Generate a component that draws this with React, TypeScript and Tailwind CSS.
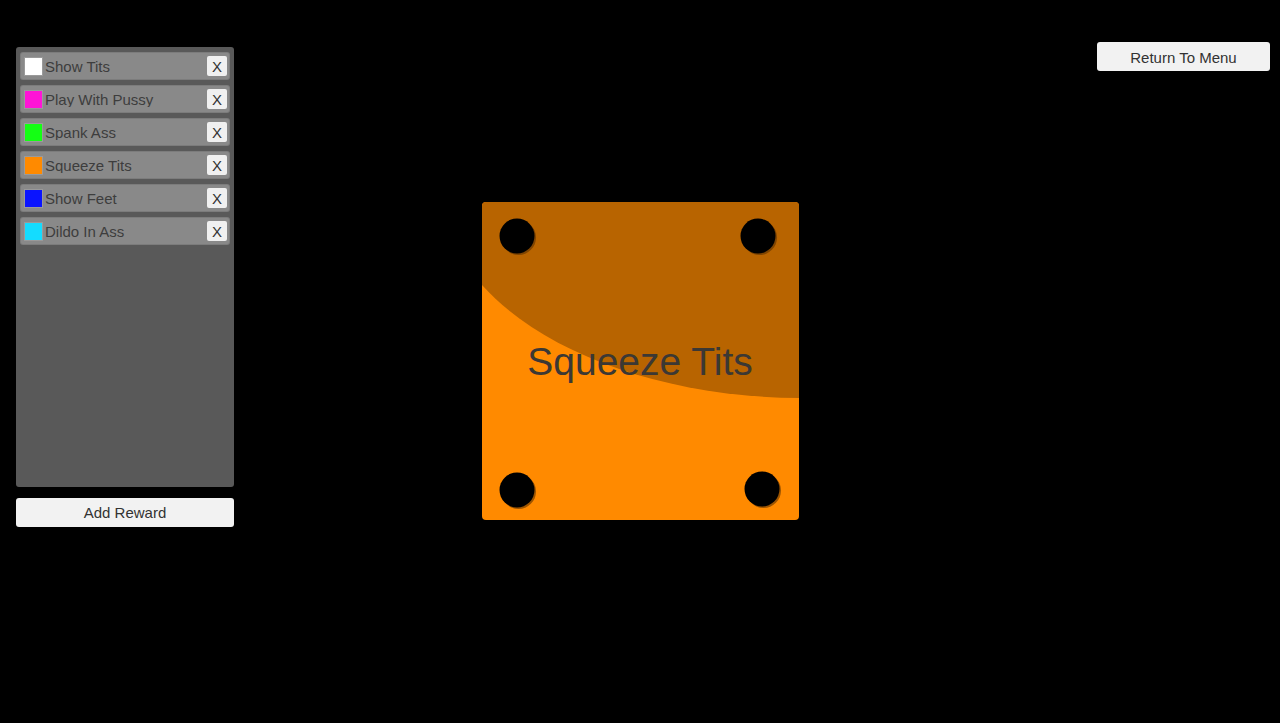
import React from "react";

type Reward = { name: string; color: string };

const rewards: Reward[] = [
  { name: "Show Tits", color: "#ffffff" },
  { name: "Play With Pussy", color: "#ff14d6" },
  { name: "Spank Ass", color: "#14ff14" },
  { name: "Squeeze Tits", color: "#ff8a00" },
  { name: "Show Feet", color: "#0a14ff" },
  { name: "Dildo In Ass", color: "#14dcff" },
];

// corner holes, card coordinates
const holes = [
  { cx: 35, cy: 34 },
  { cx: 276, cy: 34 },
  { cx: 35, cy: 288 },
  { cx: 280, cy: 287 },
];

function RewardRow({ reward }: { reward: Reward }) {
  return (
    <div className="flex h-[26px] items-center rounded-[2px] bg-[#898989] pl-[3px] pr-[2px] shadow-[0_0_0_1px_#7c7c7c]">
      <div
        className="h-[19px] w-[19px] shrink-0 border border-[#9a9a9a]"
        style={{ backgroundColor: reward.color }}
      />
      <span className="ml-[2px] flex-1 truncate pt-[1px] text-[15px] leading-none text-[#3d3d3d]">
        {reward.name}
      </span>
      <button className="flex h-[20px] w-[20px] items-center justify-center rounded-[2px] bg-[#f0f0f0] pt-[1px] text-[15px] leading-none text-[#333]">
        X
      </button>
    </div>
  );
}

function Card({ label }: { label: string }) {
  return (
    <div className="relative h-[318px] w-[317px] overflow-hidden rounded-[4px] bg-[#ff8a00]">
      <svg
        className="absolute inset-0"
        width="317"
        height="318"
        viewBox="0 0 317 318"
      >
        <path d="M0,0 H317 V196 C180,195 60,150 0,83 Z" fill="#b86400" />
        {holes.map((h, i) => (
          <g key={i}>
            <circle cx={h.cx + 1.5} cy={h.cy + 1.5} r="17.5" fill="#5a3000" opacity="0.6" />
            <circle cx={h.cx} cy={h.cy} r="17.5" fill="#000" />
          </g>
        ))}
      </svg>
      <div className="relative flex h-full items-center justify-center">
        <span className="text-[39px] leading-none text-[#3b3834]">{label}</span>
      </div>
    </div>
  );
}

export default function App() {
  return (
    <div
      className="flex h-[723px] w-full bg-black"
      style={{ fontFamily: '"Liberation Sans", Arial, sans-serif' }}
    >
      <div className="w-[234px] shrink-0 pl-4 pt-[47px]">
        <div className="flex h-[440px] flex-col gap-[7px] rounded-[3px] bg-[#595959] px-[5px] pt-[6px]">
          {rewards.map((r) => (
            <RewardRow key={r.name} reward={r} />
          ))}
        </div>
        <button className="mt-[11px] flex h-[29px] w-full items-center justify-center rounded-[3px] bg-[#f2f2f2] pt-[2px] text-[15px] text-[#333]">
          Add Reward
        </button>
      </div>

      <div className="flex flex-1 justify-center pt-[202px]">
        <Card label="Squeeze Tits" />
      </div>

      <div className="flex w-[234px] shrink-0 justify-end pr-[10px] pt-[42px]">
        <button className="flex h-[29px] w-[173px] items-center justify-center rounded-[3px] bg-[#f2f2f2] pt-[3px] text-[15px] text-[#333]">
          Return To Menu
        </button>
      </div>
    </div>
  );
}
